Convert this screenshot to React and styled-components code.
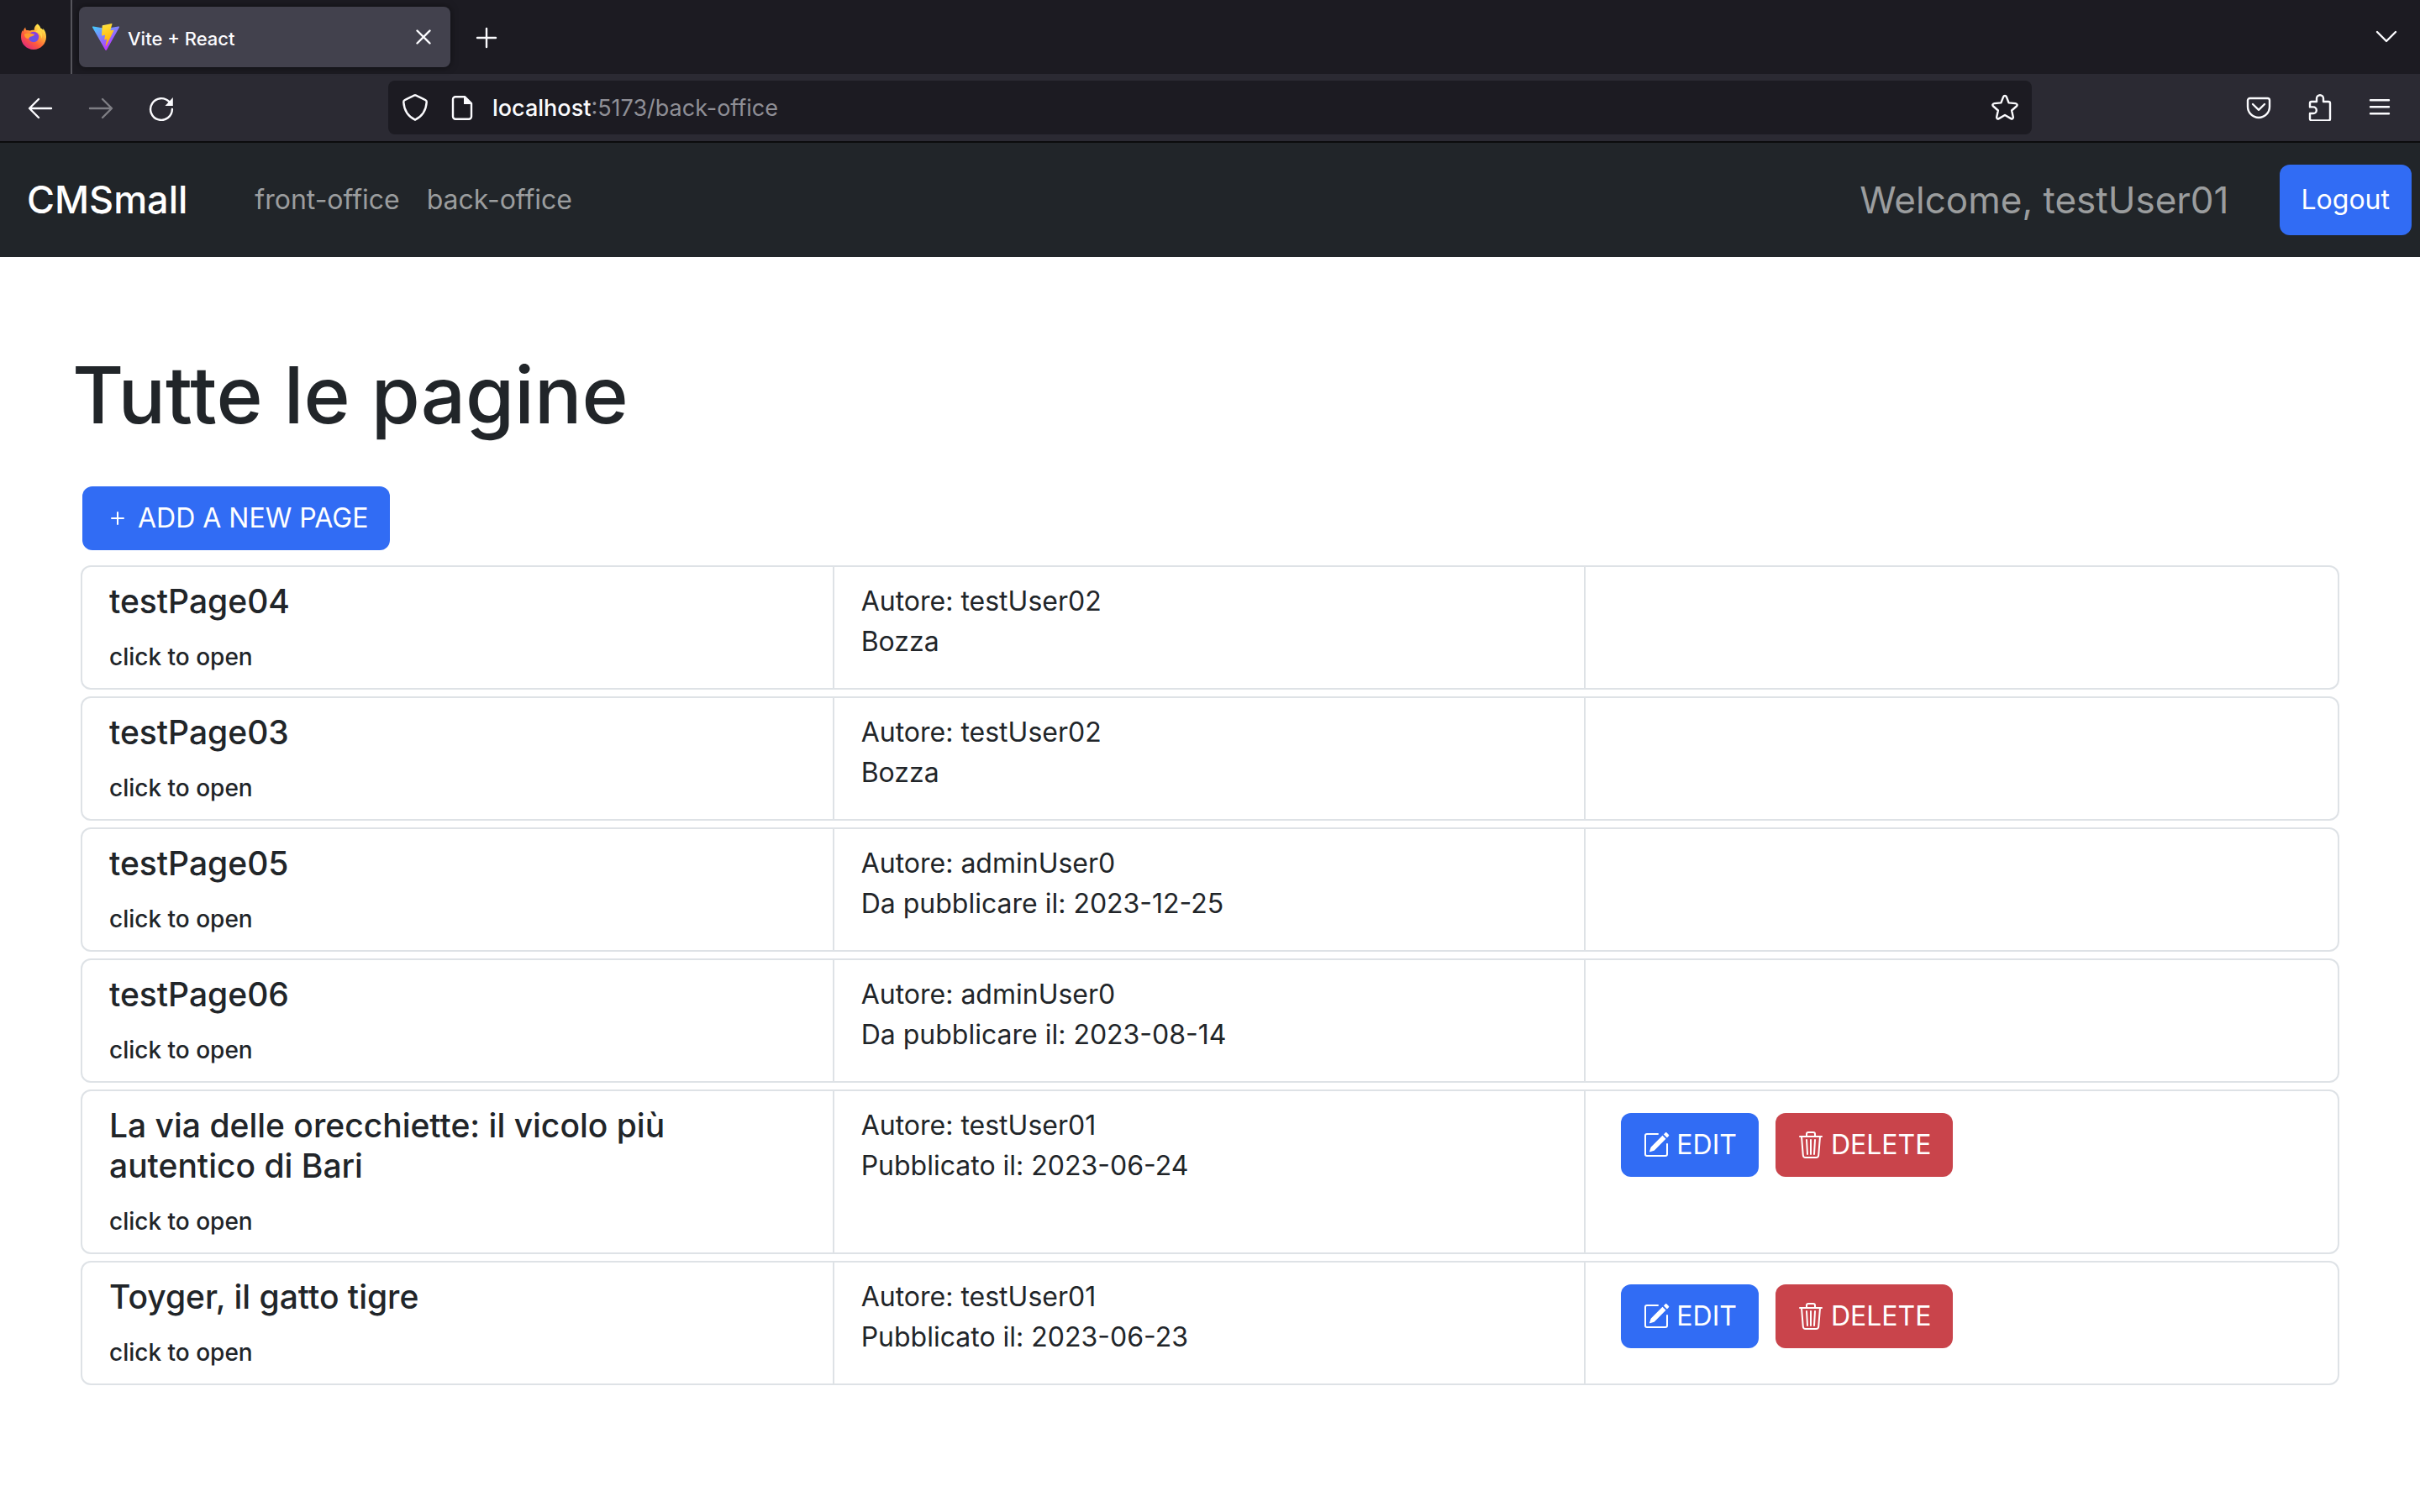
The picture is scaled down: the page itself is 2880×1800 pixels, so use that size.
import React from "react";
import styled, { createGlobalStyle, css } from "styled-components";
import { BsPencilSquare, BsPlus, BsTrash3 } from "react-icons/bs";

const Global = createGlobalStyle`
  *, *::before, *::after { box-sizing: border-box; }
  body {
    margin: 0;
    background: #ffffff;
    color: #212529;
    font-family: Inter, "Liberation Sans", sans-serif;
    font-size: 32px;
    line-height: 48px;
  }
  button, input { font: inherit; color: inherit; }
`;

/* ---------- browser chrome ---------- */

const TabStrip = styled.header`
  display: flex;
  align-items: center;
  height: 88px;
  padding-right: 24px;
  background: #1c1b22;
  color: #fbfbfe;
`;

const FirefoxView = styled.button`
  display: flex;
  align-items: center;
  justify-content: center;
  align-self: stretch;
  width: 86px;
  padding: 0 4px 0 0;
  border: 0;
  border-right: 2px solid #56555c;
  background: none;
`;

const Tab = styled.div`
  display: flex;
  align-items: center;
  width: 442px;
  height: 72px;
  margin: 0 28px 0 8px;
  padding: 0 16px;
  gap: 10px;
  border-radius: 8px;
  background: #42414d;
  box-shadow: 0 0 8px rgba(0, 0, 0, 0.5);
  font-size: 22px;
  font-weight: 500;
  line-height: 32px;
`;

const TabTitle = styled.span`
  flex: 1;
  padding-top: 4px;
`;

const IconButton = styled.button`
  display: flex;
  align-items: center;
  justify-content: center;
  flex: none;
  width: 32px;
  height: 32px;
  padding: 0;
  border: 0;
  background: none;
  color: #fbfbfe;
  opacity: ${(p) => (p.disabled ? 0.4 : 1)};
`;

const Push = styled.div`
  flex: 1;
`;

const Toolbar = styled.div`
  display: flex;
  align-items: center;
  justify-content: space-between;
  height: 82px;
  padding: 0 32px;
  border-bottom: 2px solid #0c0c0d;
  background: #2b2a33;
`;

const ToolGroup = styled.div`
  display: flex;
  align-items: center;
  gap: 40px;
`;

const AddressBar = styled.form`
  display: flex;
  align-items: center;
  flex: 1;
  height: 64px;
  margin: 0 254px;
  padding: 0 16px;
  gap: 24px;
  border-radius: 8px;
  background: #1c1b22;
`;

const Address = styled.span`
  flex: 1;
  margin-left: -4px;
  padding-top: 2px;
  color: #8f8f96;
  font-size: 27px;
  line-height: 40px;
`;

const Host = styled.span`
  color: #fbfbfe;
  font-weight: 500;
`;

const Glyph = styled.svg`
  display: block;
  width: 32px;
  height: 32px;
  flex: none;
  fill: none;
  stroke: currentColor;
  stroke-width: 2.4;
  stroke-linecap: round;
  stroke-linejoin: round;
`;

function FirefoxLogo() {
  return (
    <Glyph viewBox="0 0 32 32" aria-hidden="true">
      <defs>
        <linearGradient id="fx-body" x1="0.85" y1="0.1" x2="0.2" y2="0.95">
          <stop offset="0" stopColor="#fff14f" />
          <stop offset="0.35" stopColor="#ffa436" />
          <stop offset="0.65" stopColor="#ff5a3c" />
          <stop offset="1" stopColor="#e0287d" />
        </linearGradient>
        <radialGradient id="fx-globe" cx="0.5" cy="0.7" r="0.7">
          <stop offset="0" stopColor="#5a5be8" />
          <stop offset="1" stopColor="#9338e0" />
        </radialGradient>
      </defs>
      <g stroke="none">
        <path
          fill="url(#fx-body)"
          d="M20.5 0.5c2 1.2 3.3 2.9 3.8 4.9 1.5.5 2.5 1.5 3 2.6 0-.8-.1-1.500-.3-2.200 2.700 2.500 4 6 4 10.200 0 8.300-6.700 15-15 15S1 24.300 1 16c0-3.700.6-6.200 2-8 0 .8.100 1.300.3 1.800C4 7.500 4.600 6 6.200 4.400c.1 1.700.7 2.900 1.400 3.700 1.400-.3 2.900-.1 4.300.5 1.500-.9 3.300-1 4.800-.6-.2-2.900 1.200-5.900 3.800-7.500z"
        />
        <circle cx="16" cy="16" r="6.2" fill="url(#fx-globe)" />
        <path
          fill="#ff9a2e"
          d="M5 12.500c2.500-1 5.500-1.200 8.500-.5l3.600.8c-.2 1.500-1.800 2.300-3.900 2.600-1.700.3-2.700 1.200-2.900 2.600C7 18.200 5 16 5 12.500z"
        />
        <path fill="#ffd64a" d="M21 5c4.200 3 6.200 7.500 4.800 13C24.800 13.600 22 10.800 18.200 9.600c1.800-.6 2.800-2.400 2.800-4.600z" />
      </g>
    </Glyph>
  );
}

function ViteLogo() {
  return (
    <Glyph viewBox="0 0 32 32" aria-hidden="true">
      <defs>
        <linearGradient id="vt-a" x1="0" y1="0" x2="0.6" y2="0.9">
          <stop offset="0" stopColor="#41d1ff" />
          <stop offset="1" stopColor="#bd34fe" />
        </linearGradient>
        <linearGradient id="vt-b" x1="0.4" y1="0" x2="0.6" y2="1">
          <stop offset="0" stopColor="#ffea83" />
          <stop offset="0.08" stopColor="#ffdd35" />
          <stop offset="1" stopColor="#ffa800" />
        </linearGradient>
      </defs>
      <g stroke="none">
        <path fill="url(#vt-a)" d="M31.900 4.700 16.900 31.500a.9.9 0 0 1-1.600 0L.1 4.700a.9.9 0 0 1 1-1.300l15 2.700 14.700-2.700a.9.9 0 0 1 1.100 1.300z" />
        <path fill="url(#vt-b)" d="m23.100 0-11.100 2.200a.4.4 0 0 0-.3.400L11 14.100c0 .3.200.5.500.4l3.100-.7c.3 0 .5.200.5.500l-.9 4.500c-.1.300.2.600.5.500l1.900-.6c.3-.1.600.2.500.5l-1.500 7c-.1.500.5.700.8.300l.1-.2 9-18c.2-.3-.1-.7-.4-.6l-3.200.6c-.3 0-.6-.2-.5-.5L23.500.5c.1-.3-.1-.5-.4-.5z" />
      </g>
    </Glyph>
  );
}

const BackIcon = () => (
  <Glyph viewBox="0 0 32 32"><path d="M29 17H3.200M14 6 3 17l11 11" /></Glyph>
);
const ForwardIcon = () => (
  <Glyph viewBox="0 0 32 32"><path d="M3 17h25.800M18 6l11 11-11 11" /></Glyph>
);
const ReloadIcon = () => (
  <Glyph viewBox="0 0 32 32">
    <path d="M28.900 18A12.900 12.900 0 1 1 25.500 9.300" />
    <path d="M29.800 4v10h-9.300z" fill="currentColor" stroke="none" />
  </Glyph>
);
const ShieldIcon = () => (
  <Glyph viewBox="0 0 32 32">
    <path d="M16 1.200c.5 0 9.500 4.300 12.500 6 1 .6 1.300 1.300 1.200 2.500-.6 9-4.500 16.500-13.700 21C6.800 26.200 2.900 18.700 2.300 9.700c-.1-1.200.2-1.900 1.200-2.500 3-1.700 12-6 12.500-6z" />
  </Glyph>
);
const PageIcon = () => (
  <Glyph viewBox="0 0 32 32">
    <path d="M19 3.200H8a3 3 0 0 0-3 3v20.600a3 3 0 0 0 3 3h16a3 3 0 0 0 3-3V11z" />
    <path d="M18 3.200V12h9z" fill="currentColor" stroke="none" />
  </Glyph>
);
const StarIcon = () => (
  <Glyph viewBox="0 0 32 32">
    <path d="M16 2c1 0 1.600.6 1.900 1.400l2.700 7 8 .7c1.900.2 2.700 2.100 1.200 3.400l-5.700 5 1.700 7.700c.3 1.800-1.200 2.800-2.700 1.900L16 25l-7.100 4.100c-1.500.9-3-.1-2.700-1.900l1.700-7.700-5.700-5c-1.500-1.300-.7-3.200 1.200-3.400l8-.7 2.700-7C14.400 2.600 15 2 16 2z" />
  </Glyph>
);
const PocketIcon = () => (
  <Glyph viewBox="0 0 32 32">
    <path d="M5.500 5h21A2.500 2.500 0 0 1 29 7.500V15a13 13 0 0 1-26 0V7.500A2.500 2.500 0 0 1 5.500 5z" />
    <path d="m9 12 7 6.800 7-6.800" />
  </Glyph>
);
const PuzzleIcon = () => (
  <Glyph viewBox="0 0 32 32">
    <path d="M13 9V5.200a4 4 0 0 1 8 0V9h6a2 2 0 0 1 2 2v18.500a2 2 0 0 1-2 2H7a2 2 0 0 1-2-2V23h4a3.800 3.800 0 0 0 0-7.600H5V11a2 2 0 0 1 2-2z" />
  </Glyph>
);
const MenuIcon = () => (
  <Glyph viewBox="0 0 32 32"><path d="M5 7.300h22M5 15.300h22M5 23.300h22" /></Glyph>
);
const CloseIcon = () => (
  <Glyph viewBox="0 0 32 32"><path d="m8.500 8.500 15 15m0-15-15 15" /></Glyph>
);
const PlusIcon = () => (
  <Glyph viewBox="0 0 32 32"><path d="M15 6v22M4 17h22" /></Glyph>
);
const ChevronIcon = () => (
  <Glyph viewBox="0 0 32 32"><path d="m5 10 11 11 11-11" /></Glyph>
);

/* ---------- site ---------- */

const Navbar = styled.nav`
  display: flex;
  align-items: center;
  min-height: 136px;
  padding: 0 10px 0 32px;
  background: #212529;
`;

const Brand = styled.a`
  margin-right: 80px;
  color: #ffffff;
  font-size: 45px;
  font-weight: 500;
  line-height: 60px;
  text-decoration: none;
`;

const NavLinks = styled.div`
  display: flex;
  flex: 1;
  gap: 32px;
`;

const NavLink = styled.a`
  color: #9b9d9e;
  text-decoration: none;
`;

const Welcome = styled.span`
  margin-right: 60px;
  color: #9b9d9e;
  font-size: 44px;
  line-height: 60px;
`;

const Button = styled.button`
  display: inline-flex;
  align-items: center;
  justify-content: center;
  gap: 8px;
  height: ${(p) => (p.$tall ? 84 : 76)}px;
  padding: 0 26px;
  border: 0;
  border-radius: 12px;
  background: ${(p) => (p.$danger ? "#c9444b" : "#316cf4")};
  color: #ffffff;
  line-height: 48px;
  white-space: nowrap;

  svg {
    flex: none;
    width: 32px;
    height: 32px;
  }
`;

const Main = styled.main`
  padding: 108px 96px;
`;

const Title = styled.h1`
  margin: 0 0 53px -10px;
  font-size: 94px;
  font-weight: 500;
  line-height: 112px;
`;

const AddRow = styled.div`
  display: flex;
  padding-left: 2px;
`;

const PageList = styled.ul`
  display: flex;
  flex-direction: column;
  gap: 8px;
  margin: 18px 0 0;
  padding: 0;
  list-style: none;
`;

const PageRow = styled.li`
  display: grid;
  grid-template-columns: repeat(3, 1fr);
  border: 2px solid #dee2e6;
  border-radius: 12px;
`;

const Cell = styled.div`
  min-height: 144px;
  padding: 17px 32px 13px;
  ${(p) =>
    p.$divided &&
    css`
      margin-left: -2px;
      border-left: 2px solid #dee2e6;
    `}
`;

const PageName = styled.h5`
  max-width: 720px;
  margin: 0 0 18px;
  font-size: 39px;
  font-weight: 500;
  line-height: 48px;
`;

const Hint = styled.small`
  display: block;
  font-size: 28px;
  font-weight: 500;
  line-height: 48px;
`;

const Actions = styled.div`
  display: flex;
  gap: 20px;
  padding: 9px 10px;
`;

const pages = [
  { name: "testPage04", author: "testUser02", state: "Bozza" },
  { name: "testPage03", author: "testUser02", state: "Bozza" },
  { name: "testPage05", author: "adminUser0", state: "Da pubblicare il: 2023-12-25" },
  { name: "testPage06", author: "adminUser0", state: "Da pubblicare il: 2023-08-14" },
  {
    name: "La via delle orecchiette: il vicolo più autentico di Bari",
    author: "testUser01",
    state: "Pubblicato il: 2023-06-24",
    own: true,
  },
  { name: "Toyger, il gatto tigre", author: "testUser01", state: "Pubblicato il: 2023-06-23", own: true },
];

export default function App() {
  return (
    <>
      <Global />
      <TabStrip>
        <FirefoxView aria-label="Firefox View"><FirefoxLogo /></FirefoxView>
        <Tab>
          <ViteLogo />
          <TabTitle>Vite + React</TabTitle>
          <IconButton aria-label="Close tab"><CloseIcon /></IconButton>
        </Tab>
        <IconButton aria-label="New tab"><PlusIcon /></IconButton>
        <Push />
        <IconButton aria-label="List all tabs"><ChevronIcon /></IconButton>
      </TabStrip>
      <Toolbar>
        <ToolGroup>
          <IconButton aria-label="Back"><BackIcon /></IconButton>
          <IconButton aria-label="Forward" disabled><ForwardIcon /></IconButton>
          <IconButton aria-label="Reload"><ReloadIcon /></IconButton>
        </ToolGroup>
        <AddressBar>
          <IconButton type="button" aria-label="Tracking protection"><ShieldIcon /></IconButton>
          <IconButton type="button" aria-label="Site information"><PageIcon /></IconButton>
          <Address><Host>localhost</Host>:5173/back-office</Address>
          <IconButton type="button" aria-label="Bookmark"><StarIcon /></IconButton>
        </AddressBar>
        <ToolGroup>
          <IconButton aria-label="Pocket"><PocketIcon /></IconButton>
          <IconButton aria-label="Extensions"><PuzzleIcon /></IconButton>
          <IconButton aria-label="Menu"><MenuIcon /></IconButton>
        </ToolGroup>
      </Toolbar>
      <Navbar>
        <Brand href="#">CMSmall</Brand>
        <NavLinks>
          <NavLink href="#front-office">front-office</NavLink>
          <NavLink href="#back-office">back-office</NavLink>
        </NavLinks>
        <Welcome>Welcome, testUser01</Welcome>
        <Button $tall>Logout</Button>
      </Navbar>
      <Main>
        <Title>Tutte le pagine</Title>
        <AddRow>
          <Button><BsPlus aria-hidden="true" />ADD A NEW PAGE</Button>
        </AddRow>
        <PageList>
          {pages.map((page) => (
            <PageRow key={page.name}>
              <Cell>
                <PageName>{page.name}</PageName>
                <Hint>click to open</Hint>
              </Cell>
              <Cell $divided>
                <div>Autore: {page.author}</div>
                <div>{page.state}</div>
              </Cell>
              <Cell $divided>
                {page.own && (
                  <Actions>
                    <Button><BsPencilSquare aria-hidden="true" />EDIT</Button>
                    <Button $danger><BsTrash3 aria-hidden="true" />DELETE</Button>
                  </Actions>
                )}
              </Cell>
            </PageRow>
          ))}
        </PageList>
      </Main>
    </>
  );
}
